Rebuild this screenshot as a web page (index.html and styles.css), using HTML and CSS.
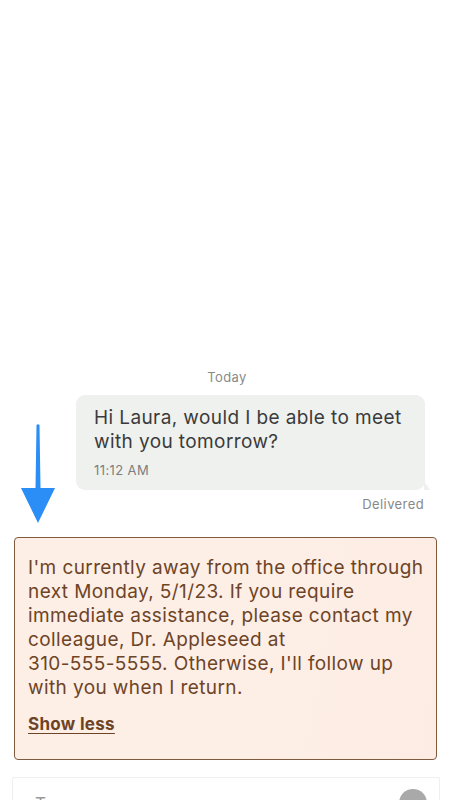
FILE: index.html
```html
<!DOCTYPE html>
<html>
<head>
<meta charset="utf-8">
<link rel="stylesheet" href="styles.css">
</head>
<body>
<div class="screen">
  <div class="day">Today</div>
  <div class="bubble">
    <div class="msg">Hi Laura, would I be able to meet with you tomorrow?</div>
    <div class="time">11:12 AM</div>
  </div>
  <div class="status">Delivered</div>
  <div class="autoreply">
    <p class="auto-text">I'm currently away from the office through next Monday, 5/1/23. If you require immediate assistance, please contact my colleague, Dr. Appleseed at <span class="nowrap">310-555-5555.</span> Otherwise, I'll follow up with you when I return.</p>
    <a class="toggle">Show less</a>
  </div>
  <div class="composer">
    <span class="placeholder">Type a message</span>
    <span class="send"></span>
  </div>
  <svg class="arrow" width="40" height="100" viewBox="0 0 40 100">
    <path d="M18.5 1 Q20 -0.5 21.5 1 L22.5 64 L37 64 L20 99 L3 64 L17.5 64 Z" fill="#2b8ef6"/>
  </svg>
</div>
</body>
</html>
```
FILE: styles.css
```css
html, body {
  margin: 0;
  padding: 0;
  background: #ffffff;
}
body {
  font-family: Inter, "Noto Sans", "Liberation Sans", sans-serif;
  width: 450px;
  height: 800px;
  overflow: hidden;
  letter-spacing: 0.4px;
}
.screen {
  position: relative;
  display: flex;
  flex-direction: column;
  padding-top: 368px;
}
.day {
  text-align: center;
  font-size: 13px;
  line-height: 18px;
  color: #8a8a8a;
  padding-left: 4px;
}
.bubble {
  position: relative;
  margin: 9px 25px 0 76px;
  background: #eff1ef;
  border-radius: 9px;
  padding: 11px 18px 11px 18px;
}
.bubble::after {
  content: "";
  position: absolute;
  right: -5px;
  bottom: 0;
  width: 0;
  height: 0;
  border-left: 6px solid #eff1ef;
  border-top: 9px solid transparent;
}
.msg {
  font-size: 19px;
  line-height: 24px;
  color: #3b3b3b;
}
.time {
  margin-top: 7px;
  font-size: 13px;
  line-height: 18px;
  color: #7d7d7d;
}
.status {
  align-self: flex-end;
  margin: 5px 26px 0 0;
  font-size: 13px;
  line-height: 18px;
  color: #888888;
}
.autoreply {
  margin: 24px 13px 0 14px;
  border: 1px solid #7f5a3e;
  border-radius: 4px;
  background: linear-gradient(100deg, #fdefe6 0%, #fdeee6 60%, #fcece4 100%);
  padding: 18px 10px 23px 13px;
}
.auto-text {
  margin: 0;
  font-size: 19px;
  line-height: 24px;
  color: #6d4426;
}
.nowrap {
  white-space: nowrap;
}
.toggle {
  display: inline-block;
  margin-top: 12px;
  font-size: 17px;
  line-height: 24px;
  font-weight: 700;
  letter-spacing: 0.3px;
  color: #6d4426;
  text-decoration: underline;
  text-underline-offset: 3px;
}
.composer {
  display: flex;
  align-items: flex-start;
  justify-content: space-between;
  margin: 17px 10px 0 12px;
  height: 60px;
  border: 1px solid #efefef;
  border-radius: 2px;
  padding: 11px 12px 0 22px;
}
.placeholder {
  margin-top: 3px;
  font-size: 17px;
  line-height: 24px;
  color: #9a9a9a;
}
.send {
  width: 28px;
  height: 28px;
  border-radius: 50%;
  background: #a9a9a9;
}
.arrow {
  position: absolute;
  left: 18px;
  top: 424px;
}
```
